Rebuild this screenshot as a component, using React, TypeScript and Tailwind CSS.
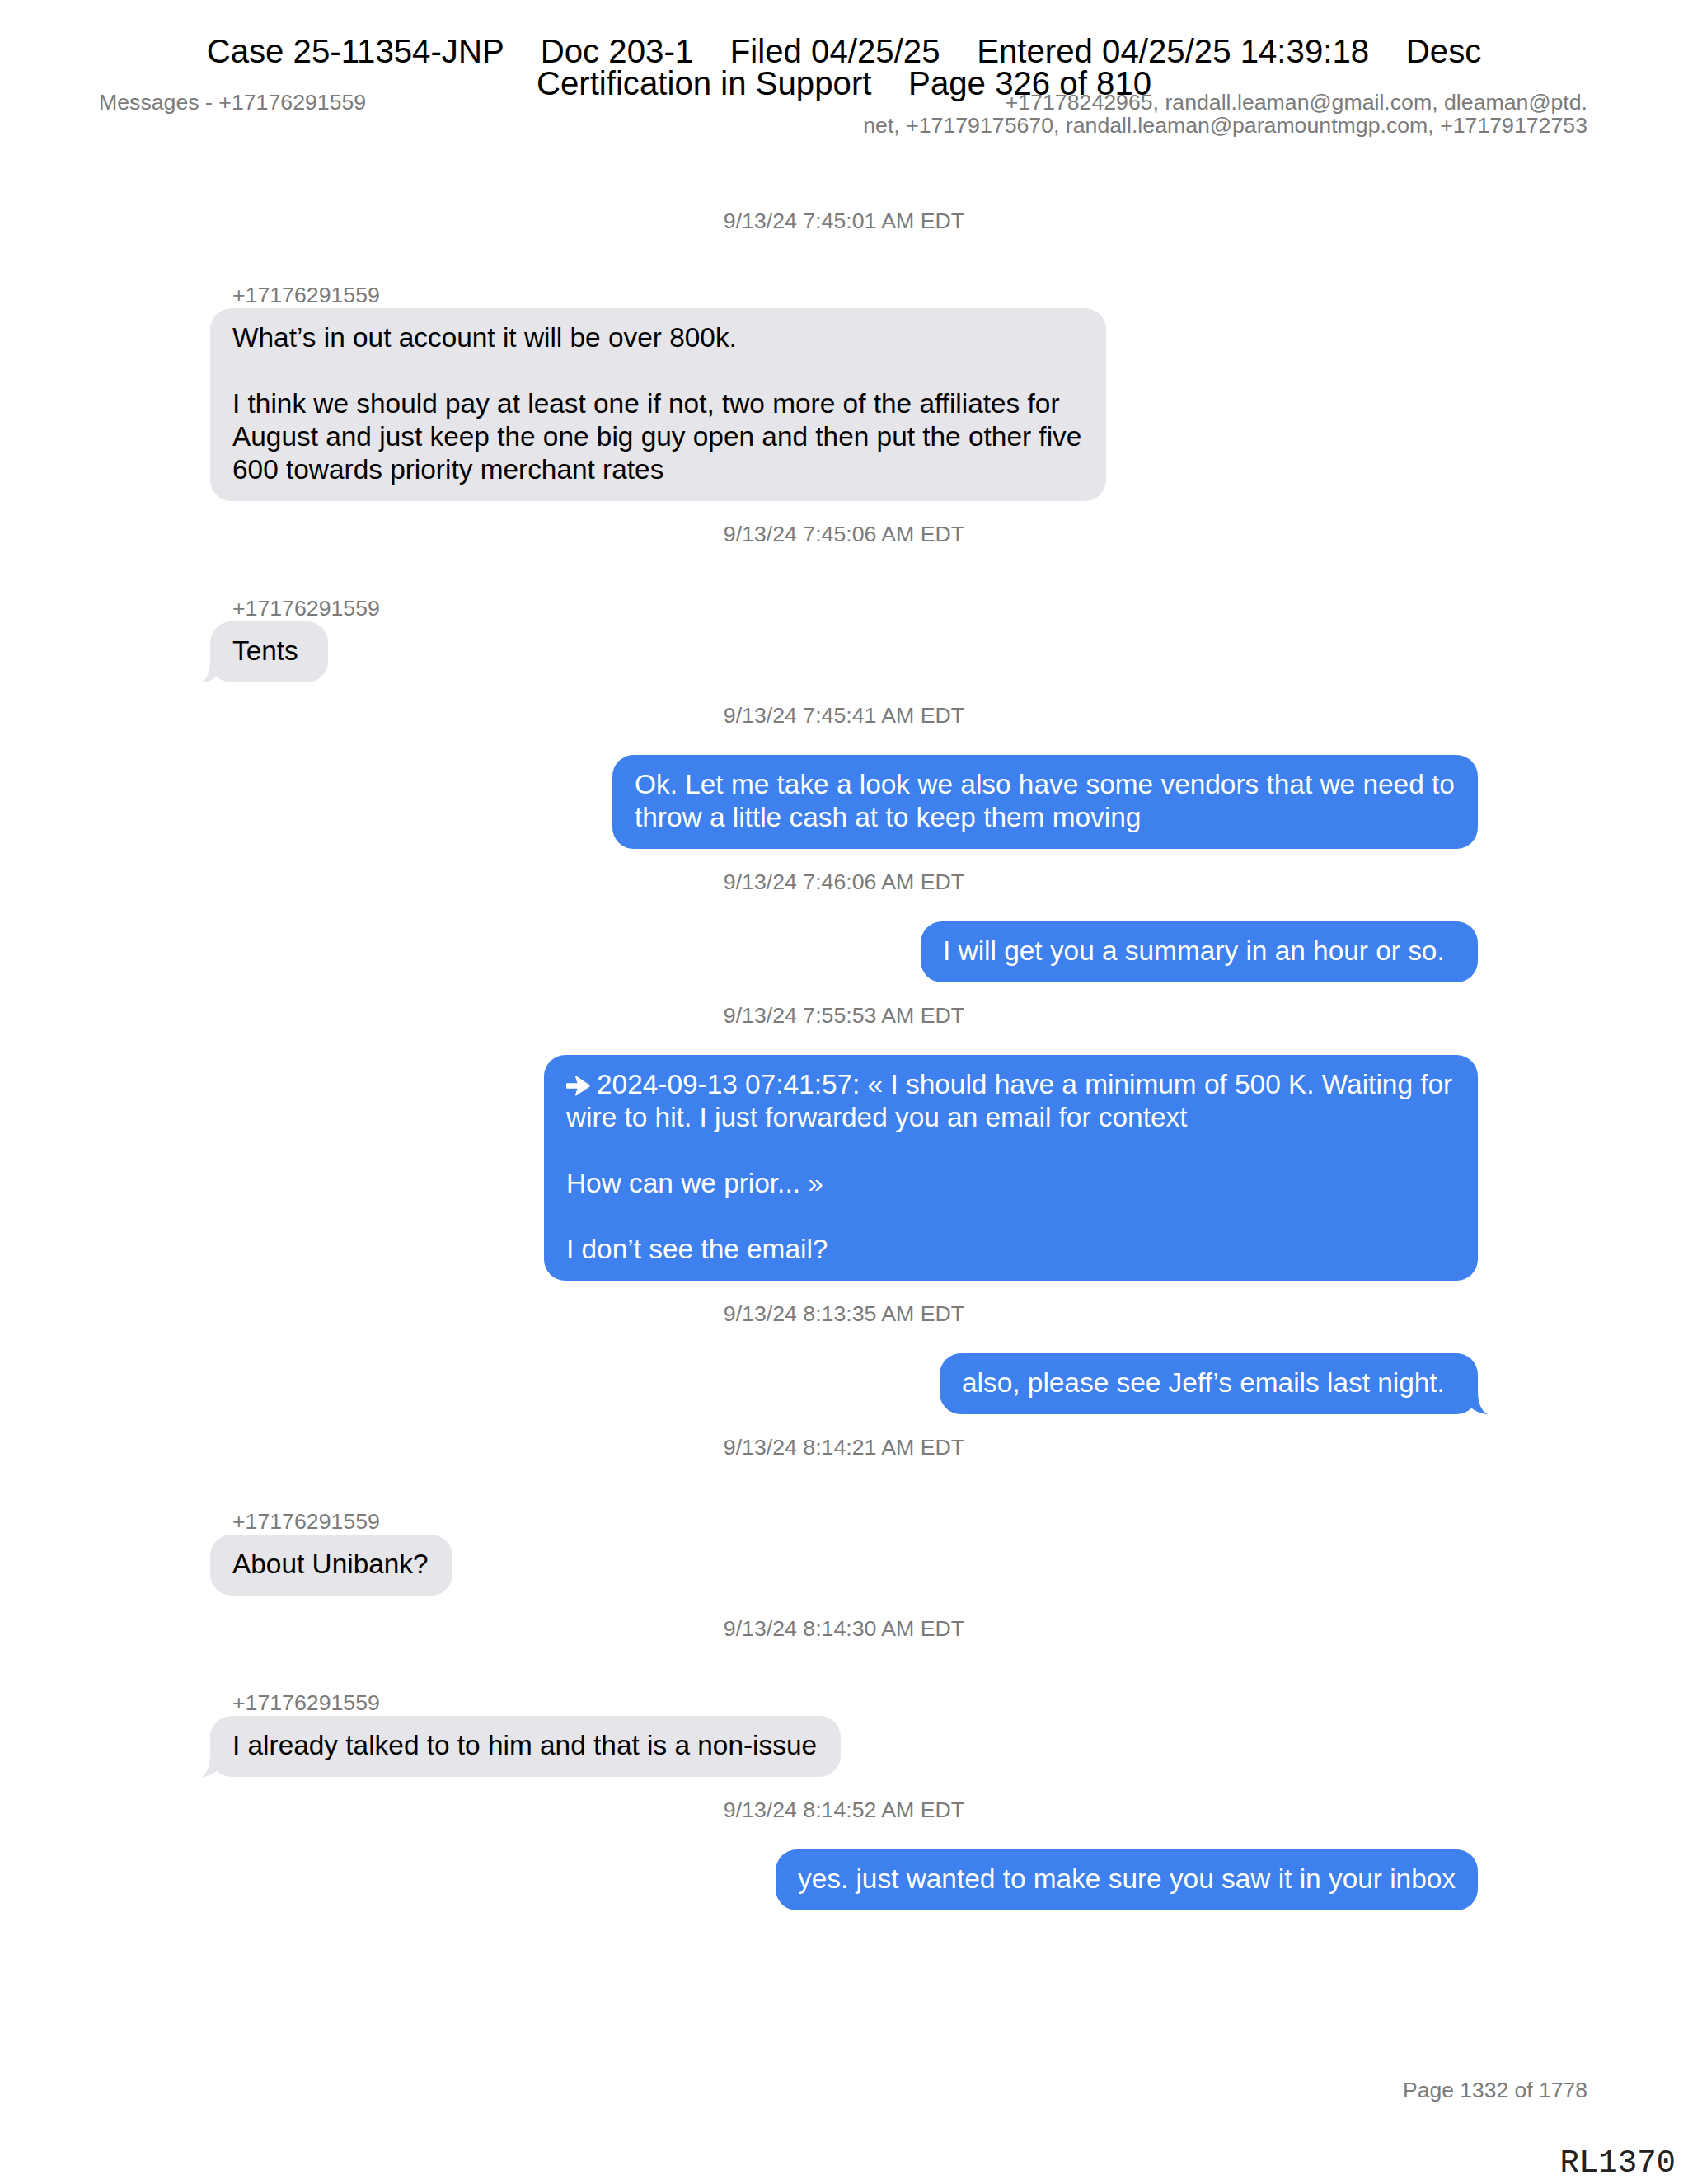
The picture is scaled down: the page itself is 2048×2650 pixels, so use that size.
import React from "react";

type Msg = {
  ts: string;
  dir: "in" | "out";
  lines: string[];
  w: string;
  tail?: boolean;
  fwd?: boolean;
};

const SENDER = "+17176291559";

const msgs: Msg[] = [
  {
    ts: "9/13/24 7:45:01 AM EDT",
    dir: "in",
    lines: [
      "What\u2019s in out account it will be over 800k.",
      "",
      "I think we should pay at least one if not, two more of the affiliates for",
      "August and just keep the one big guy open and then put the other five",
      "600 towards priority merchant rates",
    ],
    w: "min-w-[1087px]",
  },
  { ts: "9/13/24 7:45:06 AM EDT", dir: "in", lines: ["Tents"], w: "min-w-[143px]", tail: true },
  {
    ts: "9/13/24 7:45:41 AM EDT",
    dir: "out",
    lines: [
      "Ok. Let me take a look we also have some vendors that we need to",
      "throw a little cash at to keep them moving",
    ],
    w: "min-w-[1050px]",
  },
  {
    ts: "9/13/24 7:46:06 AM EDT",
    dir: "out",
    lines: ["I will get you a summary in an hour or so."],
    w: "min-w-[676px]",
  },
  {
    ts: "9/13/24 7:55:53 AM EDT",
    dir: "out",
    fwd: true,
    lines: [
      "2024-09-13 07:41:57: \u00ab I should have a minimum of 500 K. Waiting for",
      "wire to hit. I just forwarded you an email for context",
      "",
      "How can we prior... \u00bb",
      "",
      "I don\u2019t see the email?",
    ],
    w: "min-w-[1133px]",
  },
  {
    ts: "9/13/24 8:13:35 AM EDT",
    dir: "out",
    lines: ["also, please see Jeff\u2019s emails last night."],
    w: "min-w-[653px]",
    tail: true,
  },
  { ts: "9/13/24 8:14:21 AM EDT", dir: "in", lines: ["About Unibank?"], w: "min-w-[294px]" },
  {
    ts: "9/13/24 8:14:30 AM EDT",
    dir: "in",
    lines: ["I already talked to to him and that is a non-issue"],
    w: "min-w-[765px]",
    tail: true,
  },
  {
    ts: "9/13/24 8:14:52 AM EDT",
    dir: "out",
    lines: ["yes. just wanted to make sure you saw it in your inbox"],
    w: "min-w-[852px]",
  },
];

function LeftTail() {
  return (
    <svg
      className="absolute left-[-10px] bottom-0"
      width="30"
      height="32"
      viewBox="0 0 30 32"
    >
      <path
        d="M10 0 L10 4 C10 18 6 28 0 32 C7 32 13 29 18 24.6 L18 0 Z"
        fill="#e5e5ea"
      />
    </svg>
  );
}

function RightTail() {
  return (
    <svg
      className="absolute right-[-12px] bottom-0"
      width="30"
      height="32"
      viewBox="0 0 30 32"
    >
      <path
        d="M18 0 L18 4 C18 18 22 28 30 32 C23 32 16 29 10 24.6 L10 0 Z"
        fill="#3d80ee"
      />
    </svg>
  );
}

function FwdArrow() {
  return (
    <svg
      className="inline-block align-[-3px] mr-[8px]"
      width="29"
      height="25"
      viewBox="0 0 29 25"
    >
      <path
        d="M1 9.2 L13.5 9.2 L11 1.5 Q11 0 12.5 0.8 L28 11.2 Q29.5 12.5 28 13.8 L12.5 24.2 Q11 25 11 23.5 L13.5 15.8 L1 15.8 Q0 15.8 0 14.8 L0 10.2 Q0 9.2 1 9.2 Z"
        fill="#ffffff"
      />
    </svg>
  );
}

function Bubble({ m }: { m: Msg }) {
  const isIn = m.dir === "in";
  return (
    <div
      className={`relative ${m.w} rounded-[26px] pl-[27px] pr-[27px] pt-[16px] pb-[18px] text-[33.4px] leading-[40px] whitespace-pre ${
        isIn ? "bg-[#e5e5ea] text-black" : "bg-[#3d80ee] text-white"
      }`}
    >
      {m.lines.map((l, i) => (
        <div key={i} className="h-[40px]">
          {i === 0 && m.fwd ? <FwdArrow /> : null}
          {l === "" ? "\u00a0" : l}
        </div>
      ))}
      {m.tail ? isIn ? <LeftTail /> : <RightTail /> : null}
    </div>
  );
}

export default function App() {
  return (
    <div className="relative w-[2048px] h-[2650px] bg-white font-['Liberation_Sans',Arial,sans-serif] overflow-hidden">
      {/* header row */}
      <div className="flex justify-between pl-[120px] pr-[122px] pt-[110px] text-[26.7px] leading-[28px] text-[#7b7b7b]">
        <div>Messages - +17176291559</div>
        <div className="text-right">
          <div>+17178242965, randall.leaman@gmail.com, dleaman@ptd.</div>
          <div>net, +17179175670, randall.leaman@paramountmgp.com, +17179172753</div>
        </div>
      </div>

      {/* conversation */}
      <div className="ml-[255px] w-[1538px] mt-[86px] flex flex-col">
        {msgs.map((m, i) => (
          <div key={i} className={`flex flex-col ${i < msgs.length - 1 ? "mb-[24px]" : ""}`}>
            <div
              className={`text-center text-[26.7px] leading-[32px] text-[#7b7b7b] ${
                m.dir === "in" ? "mb-[58px]" : "mb-[32px]"
              }`}
            >
              {m.ts}
            </div>
            {m.dir === "in" ? (
              <div className="flex flex-col items-start">
                <div className="pl-[27px] text-[26.7px] leading-[32px] text-[#7b7b7b]">{SENDER}</div>
                <Bubble m={m} />
              </div>
            ) : (
              <div className="flex justify-end">
                <Bubble m={m} />
              </div>
            )}
          </div>
        ))}
      </div>

      {/* footer */}
      <div className="mt-[202px] pr-[122px] text-right text-[26.5px] leading-[32px] text-[#7b7b7b]">
        Page 1332 of 1778
      </div>
      <div className="mt-[51px] pr-[15px] text-right font-['Liberation_Mono','Courier_New',monospace] text-[39px] leading-[44px] text-[#222]">
        RL1370
      </div>

      {/* court filing stamp overlay */}
      <div className="absolute left-0 right-0 top-[43px] text-center text-[40.2px] leading-[39px] text-black whitespace-pre">
        <div>{"Case 25-11354-JNP    Doc 203-1    Filed 04/25/25    Entered 04/25/25 14:39:18    Desc"}</div>
        <div>{"Certification in Support    Page 326 of 810"}</div>
      </div>
    </div>
  );
}
